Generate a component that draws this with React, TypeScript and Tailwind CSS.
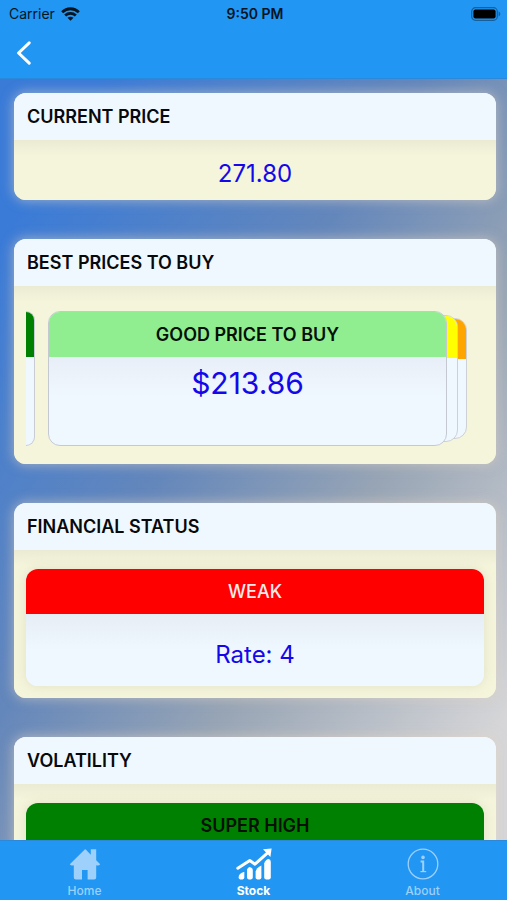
import type { ReactNode } from "react";

function WifiIcon() {
  return (
    <svg className="h-[14px] w-[19px]" viewBox="0 0 19 14" fill="none" stroke="#06141f" strokeWidth="2.8" aria-hidden="true">
      <path d="M1.2 5.2C5.8 0.6 13.2 0.6 17.8 5.2" />
      <path d="M4.2 8.5C7.2 5.7 11.8 5.7 14.8 8.5" />
      <path d="M6.5 10.8C8.2 9.3 10.8 9.3 12.5 10.8L9.5 13.8Z" fill="#06141f" stroke="none" />
    </svg>
  );
}

function BatteryIcon() {
  return (
    <svg className="h-[14px] w-[30px]" viewBox="0 0 30 14" aria-hidden="true">
      <rect x="0.7" y="0.7" width="25.6" height="12.6" rx="3.8" fill="none" stroke="#145f9c" strokeWidth="1.2" />
      <rect x="2.4" y="2.4" width="22.2" height="9.2" rx="2" fill="#000" />
      <path d="M27.6 4.6C29.8 5.4 29.8 8.6 27.6 9.4Z" fill="#145f9c" />
    </svg>
  );
}

function HomeIcon() {
  return (
    <svg className="h-8 w-8" viewBox="0 0 32 32" fill="currentColor" aria-hidden="true">
      <path d="M16 1.2 0.8 16.2Q2 18.2 4.8 17.2V29.4Q4.8 31.4 6.8 31.4H13V22H18.6V31.4H25.2Q27.2 31.4 27.2 29.4V17.2Q30 18.2 31.2 16.2L27.2 12.2V1.2H21.8V6.8L18.4 3.2Q16.6 0.8 16 1.2Z" />
    </svg>
  );
}

function StockIcon() {
  return (
    <svg className="h-8 w-9" viewBox="0 0 36 32" fill="currentColor" aria-hidden="true">
      <path d="M2.6 29.6Q2.6 25.4 8.3 23.8V29.6Q8.3 31.4 6.6 31.4H4.2Q2.6 31.4 2.6 29.6Z" />
      <path d="M11 21.6Q12.4 18.2 15 19.4 16.8 20.2 16.8 22V29.6Q16.8 31.4 15 31.4H12.8Q11 31.4 11 29.6Z" />
      <path d="M19.6 23.6Q20.2 20 25.4 17.4V29.6Q25.4 31.4 23.6 31.4H21.4Q19.6 31.4 19.6 29.6Z" />
      <path d="M28.2 15.2Q30.4 10.8 32.8 11 34.8 11.6 34.8 14V29.6Q34.8 31.4 33 31.4H30Q28.2 31.4 28.2 29.6Z" />
      <path d="M1.8 20.2 13.8 12.6 19 16.2 31.6 4.8" fill="none" stroke="currentColor" strokeWidth="3" strokeLinecap="round" strokeLinejoin="round" />
      <path d="M27 1.2 35.6 0.4 34.4 9Z" />
    </svg>
  );
}

function AboutIcon() {
  return (
    <svg className="h-8 w-8" viewBox="0 0 32 32" fill="none" stroke="currentColor" aria-hidden="true">
      <circle cx="16" cy="16" r="14.8" strokeWidth="1.3" />
      <circle cx="16" cy="9.4" r="1.8" fill="currentColor" stroke="none" />
      <path d="M13.6 13.6H16.2V23.4" strokeWidth="2" />
      <path d="M13.4 23.6H19.2" strokeWidth="1.2" />
    </svg>
  );
}

function Panel({ title, children }: { title: string; children: ReactNode }) {
  return (
    <section className="overflow-hidden rounded-xl bg-[#f5f5dc] shadow-[0_0_12px_1px_rgba(225,212,195,0.55)]">
      <h2 className="bg-[#f0f8ff] px-[13px] text-lg leading-[47px] font-semibold text-[#08090b]">{title}</h2>
      <div className="flow-root bg-linear-to-b from-[#ebead3] to-[#f5f5dc] to-[16px]">{children}</div>
    </section>
  );
}

function StatusCard({ label, tone, rate }: { label: string; tone: string; rate?: string }) {
  return (
    <div className="px-3 pt-[19px] pb-3">
      <div className="overflow-hidden rounded-xl bg-[#f0f8ff] shadow-[0_0_12px_rgba(150,150,110,0.2)]">
        <h3 className={`text-center text-lg leading-[45px] ${tone}`}>{label}</h3>
        <p className="min-h-[72px] bg-linear-to-b from-[#e6edf4] to-[#f0f8ff] to-[36px] pt-[21px] pb-[11px] text-center text-2xl leading-10 text-[#1408ea]">{rate}</p>
      </div>
    </div>
  );
}

function PriceCarousel() {
  return (
    <div className="mx-3 mt-[25px] mb-[18px] flex h-[135px] overflow-hidden pr-[37px]">
      <div className="mr-[13px] w-[9px] shrink-0 overflow-hidden rounded-r-xl border border-l-0 border-[#c9ccd2] bg-[#f0f8ff]">
        <div className="h-[45px] bg-[#008000]" />
      </div>
      <div className="relative flex-1">
        <div className="absolute inset-y-[7px] -right-5 w-10 overflow-hidden rounded-xl border border-[#cdd0d5] bg-[#f0f8ff]">
          <div className="h-10 bg-[#ffa500]" />
        </div>
        <div className="absolute inset-y-1 -right-[11px] w-10 overflow-hidden rounded-xl border border-[#cdd0d5] bg-[#f0f8ff]">
          <div className="h-[42px] bg-[#ffff00]" />
        </div>
        <article className="relative h-full overflow-hidden rounded-xl border border-[#c4c9d1] bg-[#f0f8ff]">
          <h3 className="bg-[#90ee90] text-center text-lg leading-[45px] font-semibold text-[#061006]">GOOD PRICE TO BUY</h3>
          <p className="bg-linear-to-b from-[#e8eef7] to-[#f0f8ff] to-[40px] pt-1 text-center text-3xl leading-[44px] text-[#1408ea]">$213.86</p>
        </article>
      </div>
    </div>
  );
}

const tabs = [
  { name: "Home", icon: <HomeIcon />, tone: "font-medium text-[#9dd0fb]" },
  { name: "Stock", icon: <StockIcon />, tone: "font-bold text-white" },
  { name: "About", icon: <AboutIcon />, tone: "font-medium text-[#9dd0fb]" },
];

export default function App() {
  return (
    <div className="flex h-screen flex-col bg-[#2196f3] font-['Inter','Liberation_Sans',sans-serif]">
      <header className="shrink-0 border-b border-[#2b89dc]">
        <div className="grid h-7 grid-cols-3 items-center pr-[6px] pl-[9px] text-sm text-[#06141f]">
          <div className="flex items-center gap-[6px]">
            <span>Carrier</span>
            <WifiIcon />
          </div>
          <time className="text-center font-semibold">9:50 PM</time>
          <div className="flex justify-end">
            <BatteryIcon />
          </div>
        </div>
        <button type="button" aria-label="Back" className="flex h-[50px] items-center pl-4">
          <svg className="h-6 w-4" viewBox="0 0 16 24" fill="none" stroke="#fff" strokeWidth="3" strokeLinecap="round" strokeLinejoin="round" aria-hidden="true">
            <path d="M13.2 1.8 2.6 12 13.2 22.2" />
          </svg>
        </button>
      </header>

      <main className="min-h-0 flex-1 overflow-y-auto bg-[linear-gradient(to_bottom_right,#3a7bd8_10%,#6487bb_42%,#98a5b5_64%,#d6d6d8_92%)] pt-[14px] pr-[11px] pl-[14px] [scrollbar-width:none]">
        <div className="flex flex-col gap-[39px] pb-10">
          <Panel title="CURRENT PRICE">
            <p className="pt-[14px] pb-[6px] text-center text-2xl leading-10 text-[#1408ea]">271.80</p>
          </Panel>
          <Panel title="BEST PRICES TO BUY">
            <PriceCarousel />
          </Panel>
          <Panel title="FINANCIAL STATUS">
            <StatusCard label="WEAK" tone="bg-[#ff0000] font-medium text-[#fbeaea]" rate="Rate: 4" />
          </Panel>
          <Panel title="VOLATILITY">
            <StatusCard label="SUPER HIGH" tone="bg-[#008000] font-semibold text-[#031003]" />
          </Panel>
        </div>
      </main>

      <nav className="grid h-[60px] shrink-0 grid-cols-3 border-t border-[#2b89dc]">
        {tabs.map((tab) => (
          <a key={tab.name} href={`#${tab.name}`} className={`flex flex-col items-center pt-[7px] text-xs leading-[22px] ${tab.tone}`}>
            {tab.icon}
            {tab.name}
          </a>
        ))}
      </nav>
    </div>
  );
}
